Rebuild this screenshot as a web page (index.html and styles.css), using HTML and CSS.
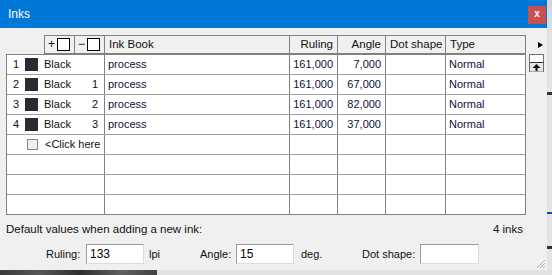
FILE: index.html
```html
<!DOCTYPE html>
<html lang="en">
<head>
    <meta charset="UTF-8">
    <title>Inks</title>
    <link rel="stylesheet" href="styles.css">
</head>
<body>

    <div class="desk">
        <!-- Inks dialog -->
        <div class="window">
            <div class="titlebar">
                <span class="title">Inks</span>
                <span class="close-btn">x</span>
            </div>

            <div class="content">
                <!-- Column headers -->
                <div class="head-line">
                    <div class="grid-head">
                        <div class="hcell hcell-box">+<span class="box"></span></div>
                        <div class="hcell hcell-box">&minus;<span class="box"></span></div>
                        <div class="hcell">Ink Book</div>
                        <div class="hcell right">Ruling</div>
                        <div class="hcell right">Angle</div>
                        <div class="hcell">Dot shape</div>
                        <div class="hcell">Type</div>
                    </div>
                    <span class="more-arrow"></span>
                </div>

                <!-- Ink rows -->
                <div class="body-line">
                    <div class="grid-body">
                        <div class="row">
                            <div class="cell cell-ink"><span class="num">1</span><span class="swatch"></span><span class="name">Black</span><span class="sub"></span></div>
                            <div class="cell">process</div>
                            <div class="cell right">161,000</div>
                            <div class="cell right">7,000</div>
                            <div class="cell"></div>
                            <div class="cell">Normal</div>
                        </div>
                        <div class="row">
                            <div class="cell cell-ink"><span class="num">2</span><span class="swatch"></span><span class="name">Black</span><span class="sub">1</span></div>
                            <div class="cell">process</div>
                            <div class="cell right">161,000</div>
                            <div class="cell right">67,000</div>
                            <div class="cell"></div>
                            <div class="cell">Normal</div>
                        </div>
                        <div class="row">
                            <div class="cell cell-ink"><span class="num">3</span><span class="swatch"></span><span class="name">Black</span><span class="sub">2</span></div>
                            <div class="cell">process</div>
                            <div class="cell right">161,000</div>
                            <div class="cell right">82,000</div>
                            <div class="cell"></div>
                            <div class="cell">Normal</div>
                        </div>
                        <div class="row">
                            <div class="cell cell-ink"><span class="num">4</span><span class="swatch"></span><span class="name">Black</span><span class="sub">3</span></div>
                            <div class="cell">process</div>
                            <div class="cell right">161,000</div>
                            <div class="cell right">37,000</div>
                            <div class="cell"></div>
                            <div class="cell">Normal</div>
                        </div>
                        <div class="row">
                            <div class="cell cell-ink"><span class="check"></span><span class="name">&lt;Click here</span></div>
                            <div class="cell"></div>
                            <div class="cell"></div>
                            <div class="cell"></div>
                            <div class="cell"></div>
                            <div class="cell"></div>
                        </div>
                        <div class="row">
                            <div class="cell cell-ink"></div>
                            <div class="cell"></div>
                            <div class="cell"></div>
                            <div class="cell"></div>
                            <div class="cell"></div>
                            <div class="cell"></div>
                        </div>
                        <div class="row">
                            <div class="cell cell-ink"></div>
                            <div class="cell"></div>
                            <div class="cell"></div>
                            <div class="cell"></div>
                            <div class="cell"></div>
                            <div class="cell"></div>
                        </div>
                        <div class="row">
                            <div class="cell cell-ink"></div>
                            <div class="cell"></div>
                            <div class="cell"></div>
                            <div class="cell"></div>
                            <div class="cell"></div>
                            <div class="cell"></div>
                        </div>
                    </div>

                    <!-- scroll to top -->
                    <span class="top-btn">
                        <svg width="15" height="18" viewBox="0 0 15 18">
                            <rect x="0.5" y="0.5" width="14" height="17" fill="#fff" stroke="#6d6d6d"/>
                            <rect x="1" y="9" width="13" height="8.5" fill="#e6e6e6"/>
                            <line x1="1" y1="8.5" x2="14" y2="8.5" stroke="#333"/>
                            <polygon points="7.5,10 3.5,14 11.5,14" fill="#111"/>
                            <rect x="6.5" y="14" width="2" height="3" fill="#111"/>
                        </svg>
                    </span>
                </div>

                <div class="info-line">
                    <span>Default values when adding a new ink:</span>
                    <span class="count">4 inks</span>
                </div>

                <div class="defaults">
                    <label class="lbl lbl-ruling">Ruling:</label>
                    <input class="field" type="text" value="133">
                    <span class="unit unit-lpi">lpi</span>
                    <label class="lbl lbl-angle">Angle:</label>
                    <input class="field" type="text" value="15">
                    <span class="unit unit-deg">deg.</span>
                    <label class="lbl lbl-dot">Dot shape:</label>
                    <input class="field field-dot" type="text" value="">
                </div>

                <svg class="grip" width="10" height="10" viewBox="0 0 10 10">
                    <line x1="9" y1="1" x2="1" y2="9" stroke="#b5b5b5"/>
                    <line x1="9" y1="4" x2="4" y2="9" stroke="#b5b5b5"/>
                    <line x1="9" y1="7" x2="7" y2="9" stroke="#b5b5b5"/>
                </svg>
            </div>
        </div>
        <div class="desk-edge"></div>
    </div>
    <div class="desk-bottom"></div>

</body>
</html>
```

FILE: styles.css
```css
body {
    margin: 0;
    width: 552px;
    height: 275px;
    overflow: hidden;
    font-family: "Liberation Sans", Arial, sans-serif;
    font-size: 11px;
    color: #111;
    background: #dcdcdc;
}

.desk {
    display: flex;
    height: 270px;
}

/* Dialog window */
.window {
    width: 547px;
    background-color: #f0f0f0;
    display: flex;
    flex-direction: column;
}

.desk-edge {
    flex: 1;
    background: linear-gradient(180deg, #cfd6de 0, #e4e4e4 40px, #e4e4e4 92px, #333 92px, #333 95px, #e4e4e4 95px, #e4e4e4 212px, #2244aa 212px, #2244aa 214px, #e4e4e4 214px, #e4e4e4 246px, #333 246px, #333 249px, #e4e4e4 249px);
}

.desk-bottom {
    height: 5px;
    background: linear-gradient(90deg, #3a3a3a 0, #565656 40px, #2e2e2e 80px, #606060 120px, #404040 157px, #e2e2e2 157px);
}

.titlebar {
    height: 28px;
    background-color: #0078d7;
    display: flex;
    align-items: center;
    justify-content: space-between;
}

.title {
    margin-left: 8px;
    font-size: 12px;
    color: #fff;
}

.close-btn {
    width: 18px;
    height: 18px;
    margin-right: 1px;
    margin-top: 2px;
    background-color: #c75050;
    color: #fff;
    font-size: 10px;
    font-weight: bold;
    line-height: 16px;
    text-align: center;
}

.content {
    position: relative;
    flex: 1;
    padding: 7px 0 0 6px;
}

/* Header row */
.head-line {
    display: flex;
    align-items: center;
}

.grid-head {
    margin-left: 38px;
    display: grid;
    grid-template-columns: 30px 30px 185px 48px 48px 60px 79px;
    height: 17px;
    border: 1px solid #808080;
    font-size: 11.5px;
}

.hcell {
    border-right: 1px solid #808080;
    padding: 0 4px;
    line-height: 17px;
    white-space: nowrap;
}

.hcell:last-child {
    border-right: 0;
}

.hcell-box {
    display: flex;
    align-items: center;
    padding: 0 0 0 3px;
    font-size: 12px;
}

.box {
    width: 11px;
    height: 11px;
    border: 1px solid #000;
    background: #fff;
    margin-left: 2px;
}

.right {
    text-align: right;
}

.more-arrow {
    margin-left: 12px;
    width: 0;
    height: 0;
    border-top: 3.5px solid transparent;
    border-bottom: 3.5px solid transparent;
    border-left: 5px solid #000;
}

/* Ink rows */
.body-line {
    display: flex;
    align-items: flex-start;
}

.grid-body {
    width: 518px;
    border: 1px solid #808080;
    background: #fff;
}

.row {
    display: grid;
    grid-template-columns: 98px 185px 48px 48px 60px 79px;
    height: 19px;
}

.row + .row {
    border-top: 1px solid #a0a0a0;
}

.cell {
    border-right: 1px solid #808080;
    padding: 0 3px;
    line-height: 19px;
    white-space: nowrap;
    color: #10103a;
}

.cell:last-child {
    border-right: 0;
}

.cell.right {
    padding-right: 4px;
}

.cell-ink {
    display: flex;
    align-items: center;
    padding: 0 6px 0 6px;
    color: #111;
}

.num {
    width: 12px;
}

.swatch {
    flex: none;
    width: 13px;
    height: 13px;
    background-color: #2b2a30;
    margin-right: 6px;
}

.name {
    flex: 1;
}

.check {
    flex: none;
    width: 9px;
    height: 9px;
    border: 1px solid #888;
    background: #f0f0f0;
    margin-left: 14px;
    margin-right: 7px;
}

.top-btn {
    margin-left: 3px;
    display: flex;
}

/* Bottom area */
.info-line {
    display: flex;
    justify-content: space-between;
    width: 517px;
    margin-top: 7px;
    line-height: 14px;
    font-size: 11.5px;
}

.defaults {
    display: flex;
    align-items: center;
    margin-top: 8px;
    font-size: 11px;
}

.lbl,
.unit {
    flex: none;
    white-space: nowrap;
}

.field {
    flex: none;
    box-sizing: border-box;
    width: 58px;
    height: 20px;
    margin: 0;
    padding: 0 3px;
    border: 1px solid;
    border-color: #9a9a9a #dcdcdc #dcdcdc #9a9a9a;
    background: #fff;
    font-family: "Liberation Sans", Arial, sans-serif;
    font-size: 12px;
    color: #000;
}

.field-dot {
    width: 59px;
}

.lbl-ruling {
    margin-left: 40px;
    width: 40px;
}

.unit-lpi {
    margin-left: 5px;
    width: 51px;
}

.lbl-angle {
    width: 36px;
}

.unit-deg {
    margin-left: 7px;
    width: 61px;
}

.lbl-dot {
    width: 58px;
}

.grip {
    position: absolute;
    right: 1px;
    bottom: 1px;
}
```
